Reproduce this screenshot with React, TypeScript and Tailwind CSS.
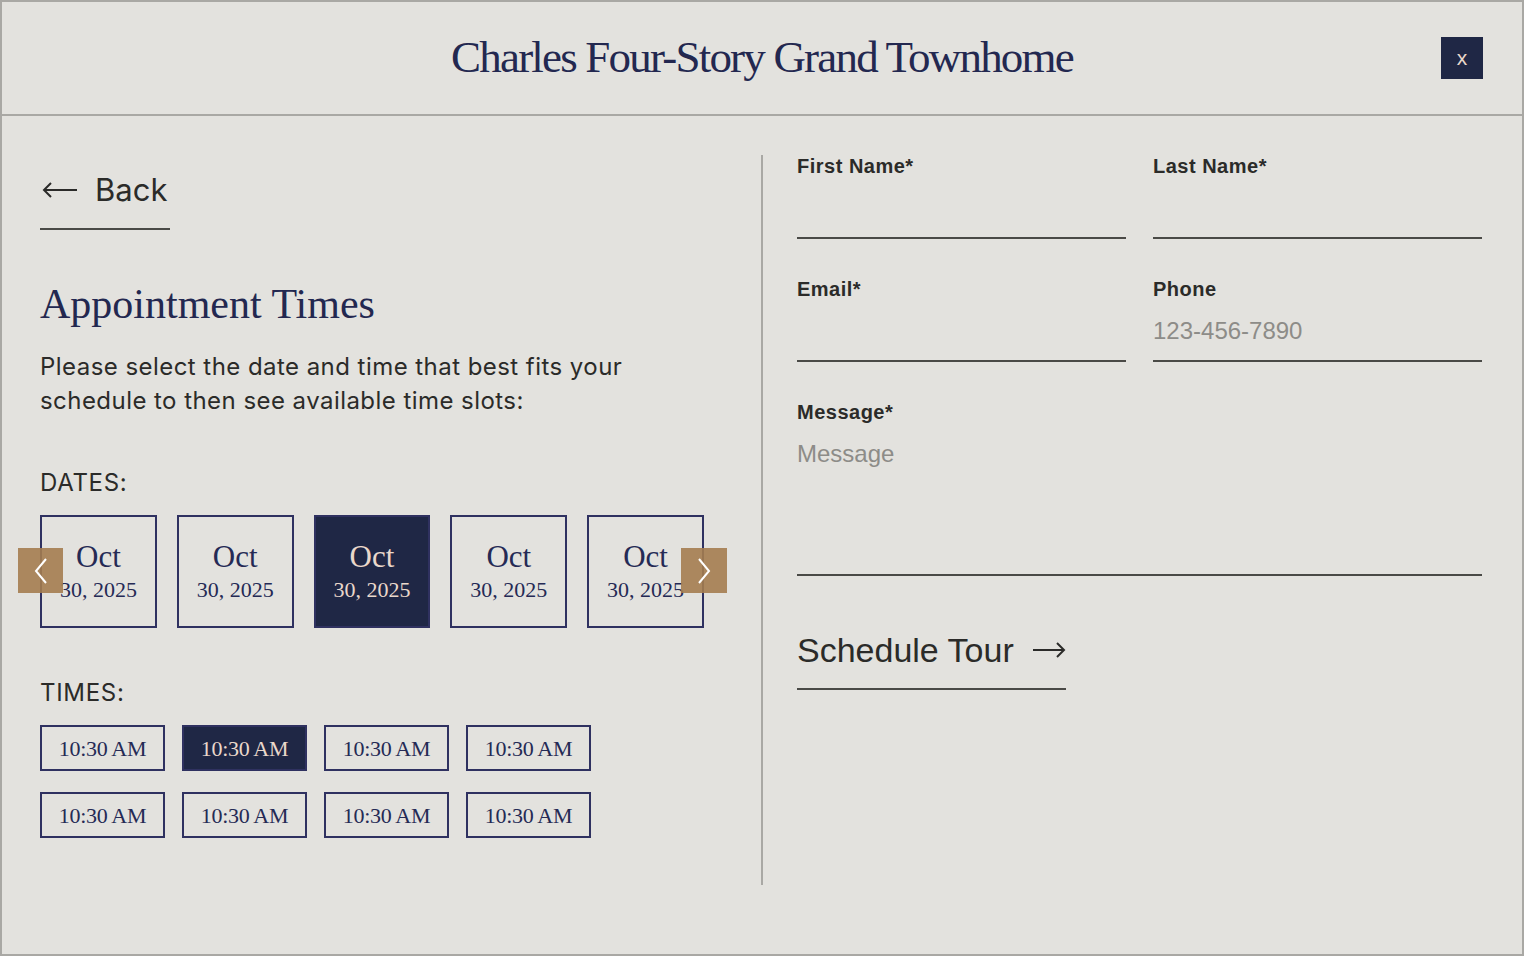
import React, { useState } from 'react';

const sans = "font-['Liberation_Sans',Arial,sans-serif]";
const body = "font-['Inter','Liberation_Sans',Arial,sans-serif]";
const serif = "font-['Liberation_Serif','Times_New_Roman',serif]";

function ArrowLeft() {
  return (
    <svg width="36" height="18" viewBox="0 0 36 18" fill="none" stroke="#2b2b29" strokeWidth="2">
      <path d="M35 9H2" />
      <path d="M9 2L2 9l7 7" />
    </svg>
  );
}

function ArrowRight() {
  return (
    <svg width="34" height="18" viewBox="0 0 34 18" fill="none" stroke="#2b2b29" strokeWidth="2">
      <path d="M1 9h31" />
      <path d="M25 2l7 7-7 7" />
    </svg>
  );
}

function Chevron({ dir }: { dir: 'left' | 'right' }) {
  return (
    <svg width="14" height="26" viewBox="0 0 14 26" fill="none" stroke="#ffffff" strokeWidth="2">
      {dir === 'left' ? <path d="M12 1L2 13l10 12" /> : <path d="M2 1l10 12L2 25" />}
    </svg>
  );
}

function Field({ label, placeholder }: { label: string; placeholder?: string }) {
  return (
    <div className="flex flex-col">
      <label className={`${sans} text-[20px] leading-[28px] font-bold text-[#2b2b29] tracking-[0.5px]`}>{label}</label>
      <input
        placeholder={placeholder}
        className={`${sans} mt-[14px] h-[45px] pb-[15px] border-b-2 border-[#4a4a46] bg-transparent outline-none text-[24px] leading-[28px] text-[#2b2b29] placeholder:text-[#8d8c88]`}
      />
    </div>
  );
}

export default function App() {
  const [date, setDate] = useState(2);
  const [time, setTime] = useState(1);
  const dates = [0, 1, 2, 3, 4];
  const times = [0, 1, 2, 3, 4, 5, 6, 7];

  return (
    <div className="w-[1524px] h-[956px] border-2 border-[#a9a8a4] bg-[#e3e2de] flex flex-col overflow-hidden">
      <header className="h-[114px] shrink-0 border-b-2 border-[#a9a8a4] grid grid-cols-[1fr_auto_1fr] items-center">
        <div />
        <h1 className={`${serif} text-[45px] leading-[56px] tracking-[-1.8px] text-[#232850] pb-[2px]`}>
          Charles Four-Story Grand Townhome
        </h1>
        <div className="flex justify-end pr-[39px]">
          <button className={`${sans} w-[42px] h-[42px] bg-[#1f2745] text-[#ead8cb] text-[21px] leading-none flex items-center justify-center pb-[2px]`}>
            x
          </button>
        </div>
      </header>

      <main className="flex flex-1">
        <section className="w-[759px] shrink-0 pl-[38px] pt-[56px]">
          <button className="flex flex-col items-start">
            <span className="flex items-center gap-[17px] h-[36px] pl-[2px]">
              <ArrowLeft />
              <span className={`${body} text-[31px] leading-[36px] text-[#2b2b29]`}>Back</span>
            </span>
            <span className="mt-[20px] block w-[130px] h-[2px] bg-[#4a4a46]" />
          </button>

          <h2 className={`${serif} mt-[49px] text-[42px] leading-[50px] text-[#232850]`}>Appointment Times</h2>

          <p className={`${body} mt-[21px] w-[640px] text-[24px] leading-[34px] text-[#2b2b29] tracking-[0.45px]`}>
            Please select the date and time that best fits your
            <br />
            schedule to then see available time slots:
          </p>

          <div className={`${body} mt-[49px] text-[24px] leading-[32px] text-[#2b2b29] tracking-[0.7px]`}>DATES:</div>

          <div className="relative mt-[16px] flex gap-[20px] w-[664px]">
            {dates.map((d) => {
              const active = d === date;
              return (
                <button
                  key={d}
                  onClick={() => setDate(d)}
                  className={`w-[117px] h-[113px] border-2 border-[#2f3160] flex flex-col items-center justify-center ${serif} ${
                    active ? 'bg-[#1f2745] text-[#ead8cb]' : 'text-[#252a55]'
                  }`}
                >
                  <span className="text-[31px] leading-[34px]">Oct</span>
                  <span className="text-[22px] leading-[28px] mt-[2px]">30, 2025</span>
                </button>
              );
            })}
            <button className="absolute left-[-22px] top-[33px] w-[45px] h-[45px] bg-[#a47d50]/90 flex items-center justify-center">
              <Chevron dir="left" />
            </button>
            <button className="absolute left-[641px] top-[33px] w-[46px] h-[45px] bg-[#a47d50]/90 flex items-center justify-center">
              <Chevron dir="right" />
            </button>
          </div>

          <div className={`${body} mt-[49px] text-[24px] leading-[32px] text-[#2b2b29] tracking-[0.7px]`}>TIMES:</div>

          <div className="mt-[16px] grid grid-cols-[repeat(4,125px)] gap-x-[17px] gap-y-[21px]">
            {times.map((t) => {
              const active = t === time;
              return (
                <button
                  key={t}
                  onClick={() => setTime(t)}
                  className={`h-[46px] border-2 border-[#2f3160] flex items-center justify-center ${serif} text-[22px] tracking-[-0.3px] ${
                    active ? 'bg-[#1f2745] text-[#ead8cb]' : 'text-[#252a55]'
                  }`}
                >
                  10:30 AM
                </button>
              );
            })}
          </div>
        </section>

        <div className="w-[2px] h-[730px] mt-[39px] bg-[#a9a8a4] shrink-0" />

        <section className="flex-1 pl-[34px] pr-[40px] pt-[36px]">
          <div className="grid grid-cols-2 gap-x-[27px] gap-y-[36px]">
            <Field label="First Name*" />
            <Field label="Last Name*" />
            <Field label="Email*" />
            <Field label="Phone" placeholder="123-456-7890" />
          </div>

          <div className="mt-[36px] flex flex-col">
            <label className={`${sans} text-[20px] leading-[28px] font-bold text-[#2b2b29] tracking-[0.5px]`}>Message*</label>
            <textarea
              placeholder="Message"
              className={`${sans} h-[150px] pt-[14px] border-b-2 border-[#4a4a46] bg-transparent outline-none resize-none text-[24px] leading-[28px] text-[#2b2b29] placeholder:text-[#8d8c88]`}
            />
          </div>

          <button className="mt-[54px] flex flex-col items-start">
            <span className="flex items-center gap-[18px] h-[40px]">
              <span className={`${sans} text-[34px] leading-[40px] text-[#2b2b29]`}>Schedule Tour</span>
              <ArrowRight />
            </span>
            <span className="mt-[18px] block w-[269px] h-[2px] bg-[#4a4a46]" />
          </button>
        </section>
      </main>
    </div>
  );
}
